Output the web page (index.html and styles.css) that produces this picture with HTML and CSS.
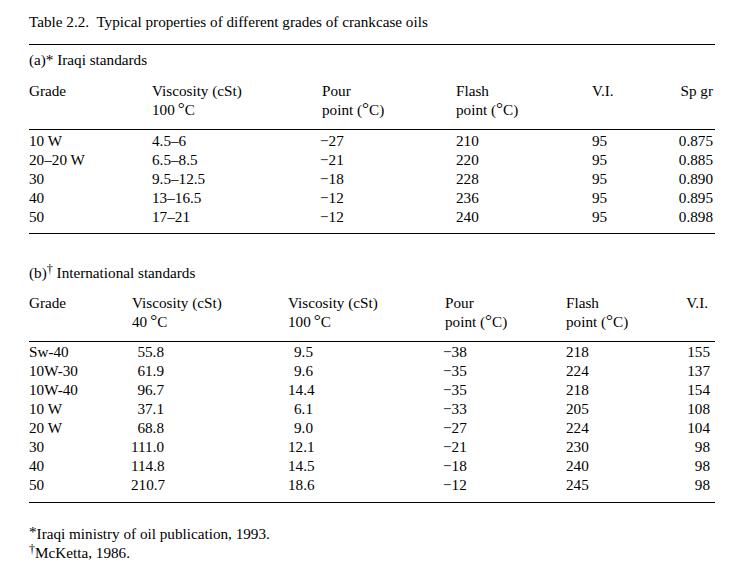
FILE: index.html
```html
<!DOCTYPE html>
<html>
<head>
<meta charset="utf-8">
<link rel="stylesheet" href="styles.css">
</head>
<body>
<div class="page">
  <div class="title">Table 2.2.&nbsp; Typical properties of different grades of crankcase oils</div>
  <div class="rule rule-top"></div>

  <div class="section">(a)* Iraqi standards</div>
  <div class="tbl tbl-a head">
    <div>Grade</div>
    <div>Viscosity (cSt)<br>100&#8201;<span class="deg">°</span>C</div>
    <div>Pour<br>point (<span class="deg">°</span>C)</div>
    <div>Flash<br>point (<span class="deg">°</span>C)</div>
    <div>V.I.</div>
    <div class="right">Sp gr</div>
  </div>
  <div class="rule"></div>
  <div class="tbl tbl-a body">
    <div>10 W</div><div>4.5–6</div><div class="neg">−27</div><div>210</div><div>95</div><div class="right">0.875</div>
    <div>20–20 W</div><div>6.5–8.5</div><div class="neg">−21</div><div>220</div><div>95</div><div class="right">0.885</div>
    <div>30</div><div>9.5–12.5</div><div class="neg">−18</div><div>228</div><div>95</div><div class="right">0.890</div>
    <div>40</div><div>13–16.5</div><div class="neg">−12</div><div>236</div><div>95</div><div class="right">0.895</div>
    <div>50</div><div>17–21</div><div class="neg">−12</div><div>240</div><div>95</div><div class="right">0.898</div>
  </div>
  <div class="rule"></div>

  <div class="section section-b">(b)<sup class="dag">†</sup> International standards</div>
  <div class="tbl tbl-b head">
    <div>Grade</div>
    <div>Viscosity (cSt)<br>40&#8201;<span class="deg">°</span>C</div>
    <div>Viscosity (cSt)<br>100&#8201;<span class="deg">°</span>C</div>
    <div>Pour<br>point (<span class="deg">°</span>C)</div>
    <div>Flash<br>point (<span class="deg">°</span>C)</div>
    <div class="right vi">V.I.</div>
  </div>
  <div class="rule"></div>
  <div class="tbl tbl-b body">
    <div>Sw-40</div><div><span class="v40">55.8</span></div><div><span class="v100">9.5</span></div><div class="neg">−38</div><div>218</div><div class="right">155</div>
    <div>10W-30</div><div><span class="v40">61.9</span></div><div><span class="v100">9.6</span></div><div class="neg">−35</div><div>224</div><div class="right">137</div>
    <div>10W-40</div><div><span class="v40">96.7</span></div><div><span class="v100">14.4</span></div><div class="neg">−35</div><div>218</div><div class="right">154</div>
    <div>10 W</div><div><span class="v40">37.1</span></div><div><span class="v100">6.1</span></div><div class="neg">−33</div><div>205</div><div class="right">108</div>
    <div>20 W</div><div><span class="v40">68.8</span></div><div><span class="v100">9.0</span></div><div class="neg">−27</div><div>224</div><div class="right">104</div>
    <div>30</div><div><span class="v40">111.0</span></div><div><span class="v100">12.1</span></div><div class="neg">−21</div><div>230</div><div class="right">98</div>
    <div>40</div><div><span class="v40">114.8</span></div><div><span class="v100">14.5</span></div><div class="neg">−18</div><div>240</div><div class="right">98</div>
    <div>50</div><div><span class="v40">210.7</span></div><div><span class="v100">18.6</span></div><div class="neg">−12</div><div>245</div><div class="right">98</div>
  </div>
  <div class="rule"></div>

  <div class="notes">
    <div><span class="star">*</span>Iraqi ministry of oil publication, 1993.</div>
    <div><sup class="dag">†</sup>McKetta, 1986.</div>
  </div>
</div>
</body>
</html>
```

FILE: styles.css
```css
html, body {
  margin: 0;
  padding: 0;
  background: #ffffff;
}

.page {
  width: 686px;
  margin-left: 29px;
  padding-top: 12px;
  font-family: "Liberation Serif", "Times New Roman", serif;
  font-size: 15.2px;
  line-height: 19px;
  color: #000000;
}

.deg {
  font-size: 1.15em;
  line-height: 0;
  position: relative;
  top: -1px;
}

sup.dag {
  font-size: 0.8em;
  line-height: 0;
  vertical-align: 0.45em;
}

.title {
  height: 19px;
}

.rule {
  height: 0;
  border-top: 1.3px solid #000000;
}

.rule-top {
  margin-top: 13px;
}

.section {
  margin-top: 5px;
  height: 19px;
}

.section-b {
  margin-top: 29px;
}

.tbl {
  display: grid;
}

.tbl-a {
  grid-template-columns: 123px 170px 134px 136px 1fr 1fr;
}

.tbl-a > div:nth-child(6n) {
  margin-right: 2px;
}

.tbl-b.head {
  grid-template-columns: 103px 156px 157px 121px 1fr 50px;
}

.tbl-b.body {
  grid-template-columns: 103px 156px 157px 121px 1fr 60px;
}

.tbl-b > div:nth-child(6n) {
  margin-right: 5px;
}

.tbl-b.head > .vi {
  margin-right: 7px;
}

.head {
  margin-top: 12px;
  margin-bottom: 10px;
}

.tbl-b.head {
  margin-top: 11px;
  margin-bottom: 10px;
}

.body {
  margin-top: 1px;
  margin-bottom: 7px;
}

.tbl-b.body {
  margin-top: 0;
  margin-bottom: 8px;
}

.right {
  text-align: right;
}

.neg {
  margin-left: -2px;
}

.v40 {
  display: inline-block;
  width: 33px;
  margin-left: -1px;
  text-align: right;
}

.v100 {
  display: inline-block;
  width: 25px;
  text-align: right;
}

.notes {
  margin-top: 21px;
}

.notes .star {
  position: relative;
  top: -2px;
}

.notes .dag {
  font-size: 0.8em;
  vertical-align: 0.4em;
}
```
